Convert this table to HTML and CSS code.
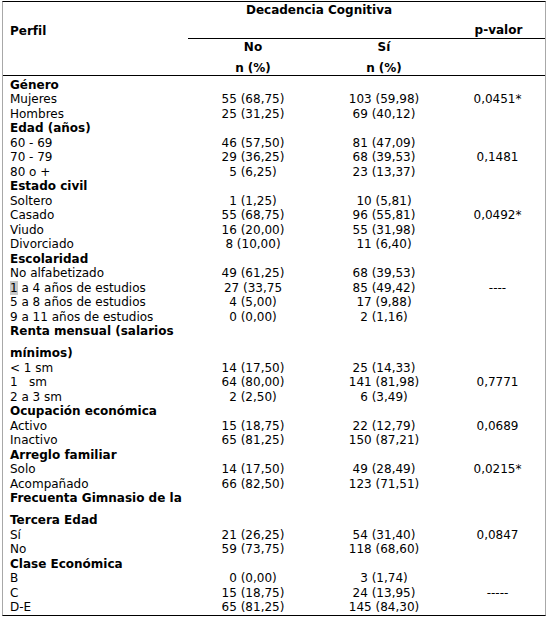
FILE: index.html
```html
<!DOCTYPE html>
<html lang="es">
<head>
<meta charset="utf-8">
<title>Decadencia Cognitiva</title>
<link rel="stylesheet" href="styles.css">
</head>
<body>
<table class="tbl">
  <colgroup>
    <col class="c-perfil">
    <col class="c-no">
    <col class="c-si">
    <col class="c-p">
  </colgroup>
  <thead>
    <tr class="hrow-a">
      <th class="h-perfil" rowspan="2">Perfil</th>
      <th class="h-dec" colspan="2">Decadencia Cognitiva</th>
      <th class="h-p">p-valor</th>
    </tr>
    <tr class="hrow-b">
      <th class="h-grp"><span class="l1">No</span><span class="l2">n (%)</span></th>
      <th class="h-grp"><span class="l1">Sí</span><span class="l2">n (%)</span></th>
      <th class="h-empty"></th>
    </tr>
  </thead>
  <tbody>
    <tr class="cat first"><td>Género</td><td></td><td></td><td></td></tr>
    <tr><td>Mujeres</td><td>55 (68,75)</td><td>103 (59,98)</td><td>0,0451*</td></tr>
    <tr><td>Hombres</td><td>25 (31,25)</td><td>69 (40,12)</td><td></td></tr>
    <tr class="cat"><td>Edad (años)</td><td></td><td></td><td></td></tr>
    <tr><td>60 - 69</td><td>46 (57,50)</td><td>81 (47,09)</td><td></td></tr>
    <tr><td>70 - 79</td><td>29 (36,25)</td><td>68 (39,53)</td><td>0,1481</td></tr>
    <tr><td>80 o +</td><td>5 (6,25)</td><td>23 (13,37)</td><td></td></tr>
    <tr class="cat"><td>Estado civil</td><td></td><td></td><td></td></tr>
    <tr><td>Soltero</td><td>1 (1,25)</td><td>10 (5,81)</td><td></td></tr>
    <tr><td>Casado</td><td>55 (68,75)</td><td>96 (55,81)</td><td>0,0492*</td></tr>
    <tr><td>Viudo</td><td>16 (20,00)</td><td>55 (31,98)</td><td></td></tr>
    <tr><td>Divorciado</td><td>8 (10,00)</td><td>11 (6,40)</td><td></td></tr>
    <tr class="cat"><td>Escolaridad</td><td></td><td></td><td></td></tr>
    <tr><td>No alfabetizado</td><td>49 (61,25)</td><td>68 (39,53)</td><td></td></tr>
    <tr><td><span class="sel">1</span> a 4 años de estudios</td><td>27 (33,75</td><td>85 (49,42)</td><td>----</td></tr>
    <tr><td>5 a 8 años de estudios</td><td>4 (5,00)</td><td>17 (9,88)</td><td></td></tr>
    <tr><td>9 a 11 años de estudios</td><td>0 (0,00)</td><td>2 (1,16)</td><td></td></tr>
    <tr class="cat wrap"><td><span class="l1">Renta mensual (salarios</span><span class="l2">mínimos)</span></td><td></td><td></td><td></td></tr>
    <tr><td>&lt; 1 sm</td><td>14 (17,50)</td><td>25 (14,33)</td><td></td></tr>
    <tr><td class="pre">1   sm</td><td>64 (80,00)</td><td>141 (81,98)</td><td>0,7771</td></tr>
    <tr><td>2 a 3 sm</td><td>2 (2,50)</td><td>6 (3,49)</td><td></td></tr>
    <tr class="cat"><td>Ocupación económica</td><td></td><td></td><td></td></tr>
    <tr><td>Activo</td><td>15 (18,75)</td><td>22 (12,79)</td><td>0,0689</td></tr>
    <tr><td>Inactivo</td><td>65 (81,25)</td><td>150 (87,21)</td><td></td></tr>
    <tr class="cat"><td>Arreglo familiar</td><td></td><td></td><td></td></tr>
    <tr><td>Solo</td><td>14 (17,50)</td><td>49 (28,49)</td><td>0,0215*</td></tr>
    <tr><td>Acompañado</td><td>66 (82,50)</td><td>123 (71,51)</td><td></td></tr>
    <tr class="cat wrap"><td><span class="l1">Frecuenta Gimnasio de la</span><span class="l2">Tercera Edad</span></td><td></td><td></td><td></td></tr>
    <tr><td>Sí</td><td>21 (26,25)</td><td>54 (31,40)</td><td>0,0847</td></tr>
    <tr><td>No</td><td>59 (73,75)</td><td>118 (68,60)</td><td></td></tr>
    <tr class="cat"><td>Clase Económica</td><td></td><td></td><td></td></tr>
    <tr><td>B</td><td>0 (0,00)</td><td>3 (1,74)</td><td></td></tr>
    <tr><td>C</td><td>15 (18,75)</td><td>24 (13,95)</td><td>-----</td></tr>
    <tr><td>D-E</td><td>65 (81,25)</td><td>145 (84,30)</td><td></td></tr>
  </tbody>
</table>
</body>
</html>
```

FILE: styles.css
```css
html, body {
  margin: 0;
  padding: 0;
  background: #ffffff;
}

body {
  font-family: "DejaVu Sans", Verdana, sans-serif;
  font-size: 12px;
  color: #000000;
}

.tbl {
  margin: 1px 0 0 2px;
  width: 544px;
  box-sizing: border-box;
  table-layout: fixed;
  border-collapse: separate;
  border-spacing: 0;
  border-top: 1px solid #000000;
  border-bottom: 1px solid #000000;
  border-left: 1px solid #a8a8a8;
  border-right: 1px solid #a8a8a8;
}

.c-perfil { width: 185px; }
.c-no { width: 130px; }
.c-si { width: 132px; }
.c-p { width: 95px; }

th, td {
  padding: 0;
  line-height: 14.5px;
  font-weight: normal;
  text-align: center;
  vertical-align: top;
  white-space: nowrap;
}

th { font-weight: bold; }

.h-perfil {
  text-align: left;
  padding: 22px 0 0 7px;
  border-bottom: 1px solid #000000;
}

.h-dec {
  padding: 1px 0 0 0;
  border-bottom: 1px solid #000000;
}

.h-p {
  padding: 20.5px 0 1px 2px;
  border-bottom: 1px solid #000000;
}

.h-grp {
  padding-top: 1px;
  border-bottom: 1px solid #000000;
}

.h-empty {
  border-bottom: 1px solid #000000;
}

.l1, .l2 {
  display: block;
}

.h-grp .l2 {
  margin-top: 6px;
}

.wrap .l2 {
  margin-top: 7.5px;
}

.first td {
  padding-top: 1.5px;
}

td:first-child {
  text-align: left;
  padding-left: 7px;
}

.cat td:first-child {
  font-weight: bold;
}

.pre {
  white-space: pre;
}

.sel {
  background: #c8c8c8;
}
```
